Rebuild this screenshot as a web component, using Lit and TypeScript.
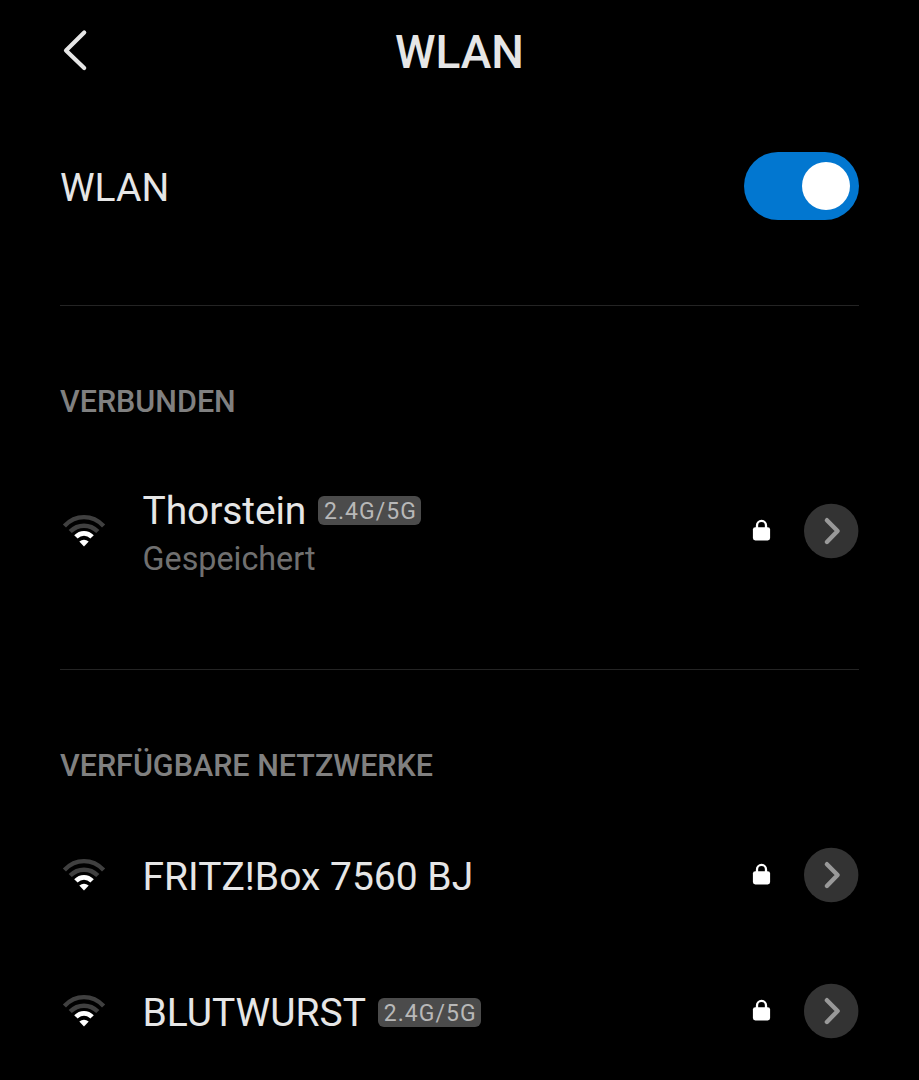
import { LitElement, html, css, nothing } from "lit";
import { customElement, property, state } from "lit/decorators.js";

interface Network {
  name: string;
  band?: string;
  status?: string;
}

@customElement("network-row")
export class NetworkRow extends LitElement {
  @property({ attribute: false }) network!: Network;

  static styles = css`
    :host {
      display: flex;
      align-items: center;
      height: 136px;
    }
    :host([tall]) {
      height: 175px;
    }
    .wifi {
      width: 44px;
      height: 34px;
      margin-left: 2px;
      flex: none;
    }
    .label {
      flex: 1;
      margin-left: 36.5px;
      padding-top: 3px;
    }
    :host([tall]) .label {
      padding-top: 8px;
    }
    .line {
      display: flex;
      align-items: center;
    }
    .name {
      font-size: 39px;
      line-height: 48px;
      color: #e6e6e6;
      white-space: nowrap;
    }
    :host([tall]) .name {
      letter-spacing: -0.12px;
    }
    .band {
      box-sizing: border-box;
      width: 103px;
      height: 29px;
      margin-left: 12px;
      padding: 1px 0 0 1.5px;
      border-radius: 6px;
      background: #4b4b4b;
      color: #b8b8b8;
      font-size: 23px;
      line-height: 30px;
      letter-spacing: 1.05px;
      text-align: center;
      white-space: nowrap;
    }
    .status {
      font-size: 32.3px;
      line-height: 48px;
      color: #707070;
    }
    .lock {
      width: 18px;
      height: 22px;
      flex: none;
      margin-right: 34px;
      overflow: visible;
    }
    .more {
      width: 54px;
      height: 54px;
      flex: none;
      margin-right: 1px;
      overflow: visible;
    }
  `;

  render() {
    const { name, band, status } = this.network;
    return html`
      <svg class="wifi" viewBox="0 0 44 34" fill="none">
        <path d="M2.4 11.9C13.6 .2 30.4 .2 41.6 11.9" stroke="#404040" stroke-width="4.4" />
        <path d="M8.2 17.5C16.2 9.7 27.8 9.7 35.8 17.5" stroke="#404040" stroke-width="4.5" />
        <path d="M13.9 22.9C18.6 18.2 25.4 18.2 30.1 22.9" stroke="#fff" stroke-width="4.8" />
        <path d="M17.3 27.6Q22 23.8 26.7 27.6L22 32.5Z" fill="#fff" />
      </svg>
      <div class="label">
        <div class="line">
          <span class="name">${name}</span>
          ${band ? html`<span class="band">${band}</span>` : nothing}
        </div>
        ${status ? html`<div class="status">${status}</div>` : nothing}
      </div>
      <svg class="lock" viewBox="0 0 18 22">
        <path d="M5 8.5V5.4a4.5 4.5 0 0 1 9 0V8.5" fill="none" stroke="#fff" stroke-width="2.3" />
        <rect x=".9" y="7.2" width="17.2" height="13.2" rx="2.4" fill="#fff" />
      </svg>
      <svg class="more" viewBox="0 0 54 54">
        <circle cx="27.2" cy="27" r="27.2" fill="#333" />
        <path d="M22.9 16.2L33.6 27L22.9 38" fill="none" stroke="#999" stroke-width="4.4"
          stroke-linecap="round" stroke-linejoin="round" />
      </svg>
    `;
  }
}

@customElement("app-root")
export class AppRoot extends LitElement {
  @state() private enabled = true;

  private connected: Network = { name: "Thorstein", band: "2.4G/5G", status: "Gespeichert" };
  private available: Network[] = [
    { name: "FRITZ!Box 7560 BJ" },
    { name: "BLUTWURST", band: "2.4G/5G" },
  ];

  static styles = css`
    :host {
      display: block;
      box-sizing: border-box;
      height: 1080px;
      padding: 0 60px;
      overflow: hidden;
      background: #000;
      font-family: Roboto, sans-serif;
    }
    header {
      display: grid;
      grid-template-columns: 30px 1fr 30px;
      align-items: center;
      height: 104px;
    }
    .back {
      width: 30px;
      height: 46px;
      margin-bottom: 5px;
    }
    h1 {
      margin: 0;
      text-align: center;
      font-size: 46px;
      font-weight: 500;
      line-height: 56px;
      color: #e6e6e6;
    }
    .switch-row {
      display: flex;
      align-items: center;
      justify-content: space-between;
      height: 164px;
    }
    .switch-label {
      padding-top: 4px;
      font-size: 39px;
      line-height: 48px;
      color: #e6e6e6;
    }
    .switch {
      display: flex;
      align-items: center;
      justify-content: flex-start;
      box-sizing: border-box;
      width: 115px;
      height: 67.5px;
      padding: 0 9.5px;
      border: 0;
      border-radius: 34px;
      background: #333;
    }
    .switch.on {
      justify-content: flex-end;
      background: #0277d0;
    }
    .knob {
      width: 48px;
      height: 48px;
      border-radius: 50%;
      background: #fff;
    }
    .divider {
      height: 1px;
      background: #242424;
    }
    .first {
      margin-top: 37px;
    }
    .second {
      margin-top: 51px;
    }
    h2 {
      margin: 76px 0 21px;
      font-size: 30.5px;
      font-weight: 500;
      line-height: 40px;
      color: #808080;
    }
  `;

  render() {
    return html`
      <header>
        <svg class="back" viewBox="0 0 30 46" fill="none">
          <path d="M24.2 5.5L6 23.5L24.2 41" stroke="#e6e6e6" stroke-width="4.2"
            stroke-linecap="round" stroke-linejoin="round" />
        </svg>
        <h1>WLAN</h1>
      </header>
      <div class="switch-row">
        <span class="switch-label">WLAN</span>
        <button class="switch ${this.enabled ? "on" : ""}" @click=${() => (this.enabled = !this.enabled)}>
          <span class="knob"></span>
        </button>
      </div>
      <div class="divider first"></div>
      <h2>VERBUNDEN</h2>
      <network-row tall .network=${this.connected}></network-row>
      <div class="divider second"></div>
      <h2>VERFÜGBARE NETZWERKE</h2>
      ${this.available.map((n) => html`<network-row .network=${n}></network-row>`)}
    `;
  }
}
